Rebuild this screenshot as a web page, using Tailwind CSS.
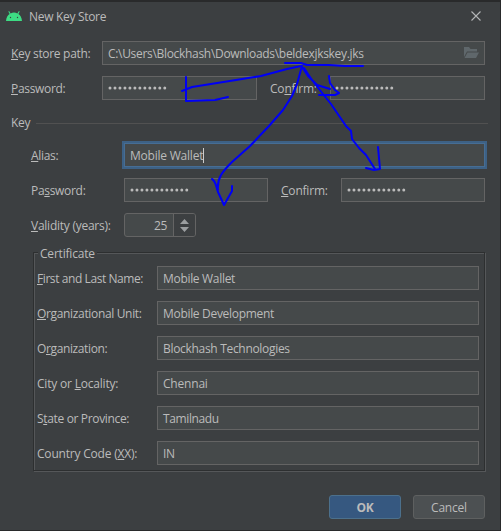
<!DOCTYPE html>
<html lang="en">
<head>
<meta charset="utf-8">
<title>New Key Store</title>
<script src="https://cdn.jsdelivr.net/npm/@tailwindcss/browser@4"></script>
</head>
<body class="w-[501px] h-[531px] overflow-hidden bg-[#2b2b2b]">
<main class="relative w-[501px] h-[531px] pt-[2px] pr-px pb-px bg-[#292a2b] text-[#bbbbbb] font-['Open_Sans','Noto_Sans',sans-serif] text-[12px] leading-[24px] tracking-[-0.31px] whitespace-nowrap">
<div class="h-[528px] bg-[#3c3f41]">
  <header class="h-[39px] flex items-start pl-[6px] pt-[3px]">
    <svg class="mt-[6px] w-4 h-[10px]" viewBox="0 0 16 10"><path d="M0 10C.3 6.400 1.800 4.200 3.600 3L2.300.5l.8-.4L4.600 2.400a8 8 0 0 1 6.800 0L12.900.1l.8.4L12.400 3C14.200 4.200 15.700 6.400 16 10z" fill="#3ddc84"/><circle cx="4.500" cy="6.500" r=".7" fill="#3c3f41"/><circle cx="11.500" cy="6.500" r=".7" fill="#3c3f41"/></svg>
    <span class="ml-[7px]">New Key Store</span>
    <svg class="ml-auto mr-[19px] mt-[6px] w-[10px] h-[10px]" viewBox="0 0 10 10"><path d="M.5.500l9 9M9.500.500l-9 9" stroke="#b4b6b7" stroke-width="1.100"/></svg>
  </header>
  <section class="flex flex-col gap-[11px]">
    <div class="flex h-6">
      <label class="w-[91px] ml-[11px] leading-[26px]"><u>K</u>ey store path:</label>
      <div class="w-[383px] border border-[#646464] bg-[#45494a] pl-[5px] pr-[5px] leading-[23px] flex items-center justify-between"><span>C:\Users\Blockhash\Downloads\beldexjkskey.jks</span>
        <svg class="w-[15px] h-[12px]" viewBox="0 0 15 12"><path d="M0 0h5l1.500 2H13v2.500H3L0 10z" fill="#5f676b"/><path d="M3.500 5.500H15L12 11H.5z" fill="#5f676b"/></svg>
      </div>
    </div>
    <div class="flex h-6">
      <label class="w-[91px] ml-[11px] leading-[26px]"><u>P</u>assword:</label>
      <div class="w-[155px] border border-[#646464] bg-[#45494a] pl-[5px] flex items-center"><svg class="w-[60px] h-[4px]" viewBox="0 0 60 4"><path d="M2 2H58" stroke="#bbb" stroke-width="3" stroke-linecap="round" stroke-dasharray="0 4.980"/></svg></div>
      <label class="w-[60px] ml-[13px] leading-[26px] tracking-[-0.2px]">Co<u>n</u>firm:</label>
      <div class="w-[155px] border border-[#646464] bg-[#45494a] pl-[4px] flex items-center"><svg class="w-[60px] h-[4px]" viewBox="0 0 60 4"><path d="M2 2H58" stroke="#bbb" stroke-width="3" stroke-linecap="round" stroke-dasharray="0 4.980"/></svg></div>
    </div>
    <div class="flex h-6 items-center pl-[11px] pr-[12px] -mb-[3px] leading-[26px]"><span class="w-[25px]">Key</span><i class="h-px grow bg-[#515151] mt-px"></i></div>
    <div class="flex h-6">
      <label class="w-[93px] ml-[31px] leading-[26px]"><u>A</u>lias:</label>
      <div class="w-[361px] border border-[#466d94] ring-2 ring-[#3d6185] bg-[#45494a] pl-[5px] leading-[23px] flex items-center tracking-[-0.22px]"><span>Mobile Wallet</span><i class="w-px h-[15px] bg-[#ccc]"></i></div>
    </div>
    <div class="flex h-6">
      <label class="w-[93px] ml-[31px] leading-[26px]">Pa<u>s</u>sword:</label>
      <div class="w-[144px] border border-[#646464] bg-[#45494a] pl-[5px] flex items-center"><svg class="w-[60px] h-[4px]" viewBox="0 0 60 4"><path d="M2 2H58" stroke="#bbb" stroke-width="3" stroke-linecap="round" stroke-dasharray="0 4.980"/></svg></div>
      <label class="w-[60px] ml-[13px] leading-[26px] tracking-[-0.2px]"><u>C</u>onfirm:</label>
      <div class="w-[144px] border border-[#646464] bg-[#45494a] pl-[5px] flex items-center"><svg class="w-[60px] h-[4px]" viewBox="0 0 60 4"><path d="M2 2H58" stroke="#bbb" stroke-width="3" stroke-linecap="round" stroke-dasharray="0 4.980"/></svg></div>
    </div>
    <div class="flex h-6">
      <label class="w-[93px] ml-[31px] leading-[26px] tracking-[-0.25px]"><u>V</u>alidity (years):</label>
      <div class="w-[72px] border border-[#646464] rounded-[3px] bg-[#45494a] leading-[23px] flex overflow-hidden"><span class="w-[49px] pr-[6px] text-right border-r border-[#646464]">25</span><span class="grow bg-[#3c3f41] flex items-center justify-center"><svg class="w-[9px] h-[13px]" viewBox="0 0 9 13"><path d="M0 5L4.500 0 9 5zM0 8h9l-4.500 5z" fill="#9b9ea0"/></svg></span></div>
    </div>
  </section>
  <section class="relative ml-[33px] mt-[15px] w-[452px] h-[219px] border border-[#2d2f30] shadow-[inset_1px_1px_#555759,1px_1px_#555759] pl-[3px] pt-[13px] flex flex-col gap-[11px]">
    <h2 class="absolute left-[4px] top-[-12px] h-6 px-[2px] bg-[#3c3f41] leading-[25px] tracking-[-0.2px]">Certificate</h2>
    <div class="flex h-6"><label class="w-[120px] leading-[26px] tracking-[-0.42px]"><u>F</u>irst and Last Name:</label><div class="w-[322px] border border-[#646464] bg-[#45494a] pl-[5px] leading-[23px]">Mobile Wallet</div></div>
    <div class="flex h-6"><label class="w-[120px] leading-[26px] tracking-[-0.34px]"><u>O</u>rganizational Unit:</label><div class="w-[322px] border border-[#646464] bg-[#45494a] pl-[5px] leading-[23px]">Mobile Development</div></div>
    <div class="flex h-6"><label class="w-[120px] leading-[26px] tracking-[-0.38px]">O<u>r</u>ganization:</label><div class="w-[322px] border border-[#646464] bg-[#45494a] pl-[5px] leading-[23px]">Blockhash Technologies</div></div>
    <div class="flex h-6"><label class="w-[120px] leading-[26px] tracking-[-0.2px]">City or <u>L</u>ocality:</label><div class="w-[322px] border border-[#646464] bg-[#45494a] pl-[5px] leading-[23px] tracking-[-0.2px]">Chennai</div></div>
    <div class="flex h-6"><label class="w-[120px] leading-[26px] tracking-[-0.34px]">S<u>t</u>ate or Province:</label><div class="w-[322px] border border-[#646464] bg-[#45494a] pl-[5px] leading-[23px] tracking-[-0.38px]">Tamilnadu</div></div>
    <div class="flex h-6"><label class="w-[120px] leading-[26px] tracking-[-0.2px]">Country Code (<u>X</u>X):</label><div class="w-[322px] border border-[#646464] bg-[#45494a] pl-[5px] leading-[23px]">IN</div></div>
  </section>
  <footer class="flex justify-end gap-[12px] pr-[15px] mt-[24px]">
    <button class="w-[72px] h-6 rounded-[3px] border border-[#4c708c] bg-[#365880] font-bold leading-[23px]">OK</button>
    <button class="w-[72px] h-6 rounded-[3px] border border-[#5e6060] bg-[#4c5052] leading-[23px] tracking-[-0.2px]">Cancel</button>
  </footer>
</div>
<svg class="absolute inset-0 w-[501px] h-[531px]" viewBox="0 0 501 531" fill="none" stroke="#0000f5" stroke-width="2" stroke-linecap="round" stroke-linejoin="round">
<path d="M285 63L301 63 307 65 329 65 345 66 363 66M301 66L287 69 261 76 236 80 192 87 182 91M186 77V101L215 100 228 97M302 66L297 84 292 96 283 110 269 126 250 146 232 162C222 172 217 178 218 190M212 179C216 181 216 187 218 192L224 205 232 191V186M302 67L308 76 317 85 330 89M304 68L312 80M329 76L330 83 335 90 339 93 335 95H319M301 66L308 75 323 94 331 104 346 126 351 131 352 139 359 148 366 155 375 169M378 147L380 169 374 170 366 168"/>
</svg>
</main>
</body>
</html>
